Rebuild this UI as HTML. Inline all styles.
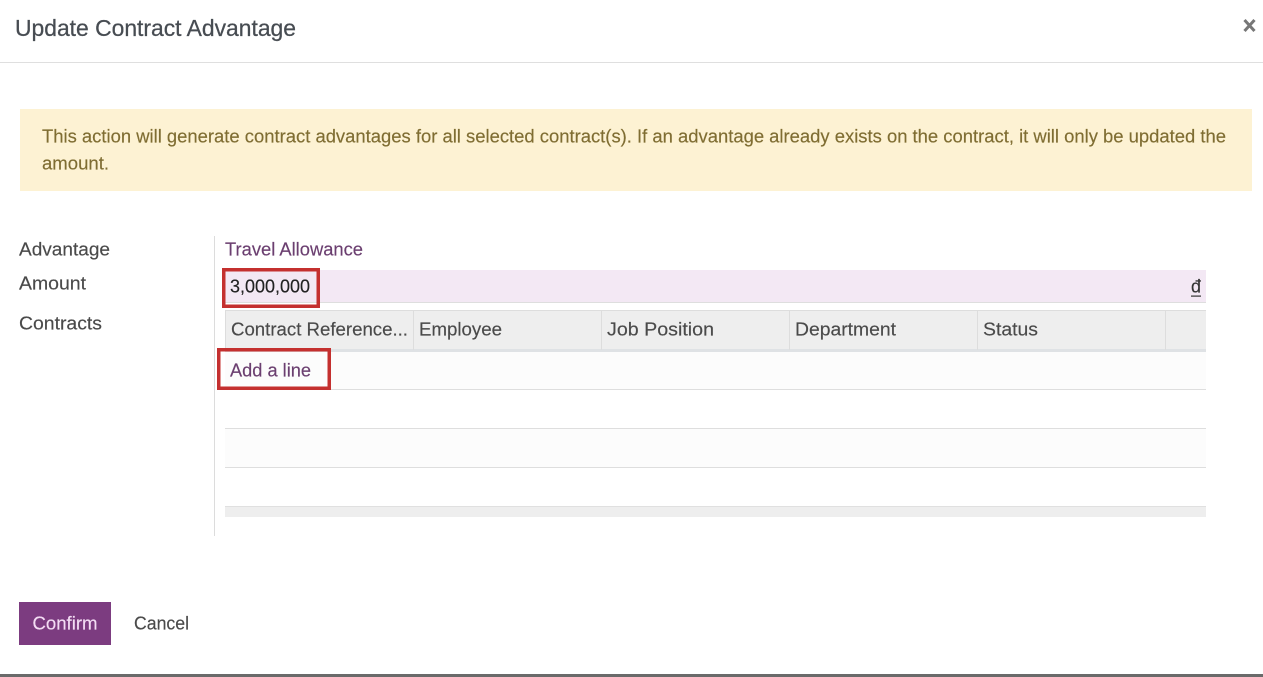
<!DOCTYPE html>
<html lang="en">
<head>
<meta charset="utf-8">
<title>Update Contract Advantage</title>
<style>
html,body{margin:0;padding:0;background:#fff;width:1263px;height:677px;overflow:hidden}
svg{display:block;position:absolute;left:0;top:0}
text{font-family:"Liberation Sans",sans-serif;font-size:18.2px;fill:#4a4a4a;stroke:#4a4a4a;stroke-width:.15px}
</style>
</head>
<body>
<svg width="1263" height="677" viewBox="0 0 1263 677" xmlns="http://www.w3.org/2000/svg">
<rect width="1263" height="677" fill="#fff"/>
<!-- header -->
<text x="15" y="36" style="font-size:23.4px;fill:#474c52;stroke:#474c52;stroke-width:.25px" textLength="281" lengthAdjust="spacingAndGlyphs">Update Contract Advantage</text>
<rect x="0" y="62" width="1263" height="1" fill="#dfdfdf"/>
<path d="M1244.5 20L1254.5 31M1254.5 20L1244.5 31" stroke="#777" stroke-width="3" fill="none"/>
<!-- alert -->
<rect x="20" y="109" width="1232" height="82" fill="#fdf2d3"/>
<text x="42" y="142.5" style="fill:#7f6d32;stroke:#7f6d32" textLength="1184" lengthAdjust="spacingAndGlyphs">This action will generate contract advantages for all selected contract(s). If an advantage already exists on the contract, it will only be updated the</text>
<text x="42" y="169.5" style="fill:#7f6d32;stroke:#7f6d32" textLength="67" lengthAdjust="spacingAndGlyphs">amount.</text>
<!-- labels -->
<text x="19" y="255.5" textLength="91" lengthAdjust="spacingAndGlyphs">Advantage</text>
<text x="19" y="289.5" textLength="67" lengthAdjust="spacingAndGlyphs">Amount</text>
<text x="19" y="329.5" textLength="83" lengthAdjust="spacingAndGlyphs">Contracts</text>
<rect x="214" y="236" width="1" height="300" fill="#dcdcdc"/>
<text x="225" y="255.5" style="fill:#6b3f70;stroke:#6b3f70" textLength="138" lengthAdjust="spacingAndGlyphs">Travel Allowance</text>
<!-- amount field -->
<rect x="225" y="270" width="981" height="32" fill="#f3e8f4"/>
<rect x="225" y="302" width="981" height="1" fill="#dedede"/>
<text x="230" y="292.5" style="fill:#222;stroke:#222" textLength="80" lengthAdjust="spacingAndGlyphs">3,000,000</text>
<text x="1191" y="292.5" style="fill:#333;stroke:#333" textLength="10" lengthAdjust="spacingAndGlyphs">đ</text>
<rect x="1191" y="295.5" width="10" height="1.2" fill="#333"/>
<!-- table header -->
<rect x="225" y="310" width="981" height="40" fill="#eeeeee"/>
<rect x="225" y="310" width="981" height="1" fill="#dddddd"/>
<rect x="225" y="349" width="981" height="3" fill="#dfe2e5"/>
<rect x="225" y="310" width="1" height="40" fill="#dddddd"/>
<rect x="413" y="310" width="1" height="40" fill="#dddddd"/>
<rect x="601" y="310" width="1" height="40" fill="#dddddd"/>
<rect x="789" y="310" width="1" height="40" fill="#dddddd"/>
<rect x="977" y="310" width="1" height="40" fill="#dddddd"/>
<rect x="1165" y="310" width="1" height="40" fill="#dddddd"/>
<text x="231" y="335.5" textLength="177" lengthAdjust="spacingAndGlyphs">Contract Reference...</text>
<text x="419" y="335.5" textLength="83" lengthAdjust="spacingAndGlyphs">Employee</text>
<text x="607" y="335.5" textLength="107" lengthAdjust="spacingAndGlyphs">Job Position</text>
<text x="795" y="335.5" textLength="101" lengthAdjust="spacingAndGlyphs">Department</text>
<text x="983" y="335.5" textLength="55" lengthAdjust="spacingAndGlyphs">Status</text>
<!-- rows -->
<rect x="225" y="352" width="981" height="37" fill="#fcfcfc"/>
<rect x="225" y="389" width="981" height="1" fill="#dedede"/>
<rect x="225" y="428" width="981" height="1" fill="#dedede"/>
<rect x="225" y="429" width="981" height="38" fill="#fcfcfc"/>
<rect x="225" y="467" width="981" height="1" fill="#dedede"/>
<rect x="225" y="506" width="981" height="11" fill="#eeeeee"/>
<rect x="225" y="506" width="981" height="1" fill="#e0e0e0"/>
<text x="230" y="376.5" style="fill:#6b3f70;stroke:#6b3f70" textLength="81" lengthAdjust="spacingAndGlyphs">Add a line</text>
<!-- red annotation boxes -->
<rect x="223.75" y="269.75" width="94.5" height="36.5" fill="none" stroke="#c4302f" stroke-width="3.5"/>
<rect x="218.75" y="349.75" width="110.5" height="38.5" fill="none" stroke="#c4302f" stroke-width="3.5"/>
<!-- buttons -->
<rect x="19" y="602" width="92" height="43" fill="#7c3c80"/>
<text x="32.5" y="629.5" style="fill:#f3dcf3;stroke:#f3dcf3" textLength="65" lengthAdjust="spacingAndGlyphs">Confirm</text>
<text x="134" y="629.5" textLength="55" lengthAdjust="spacingAndGlyphs">Cancel</text>
<!-- bottom edge -->
<rect x="0" y="674" width="1263" height="3" fill="#6a6a6a"/>
</svg>
</body>
</html>
